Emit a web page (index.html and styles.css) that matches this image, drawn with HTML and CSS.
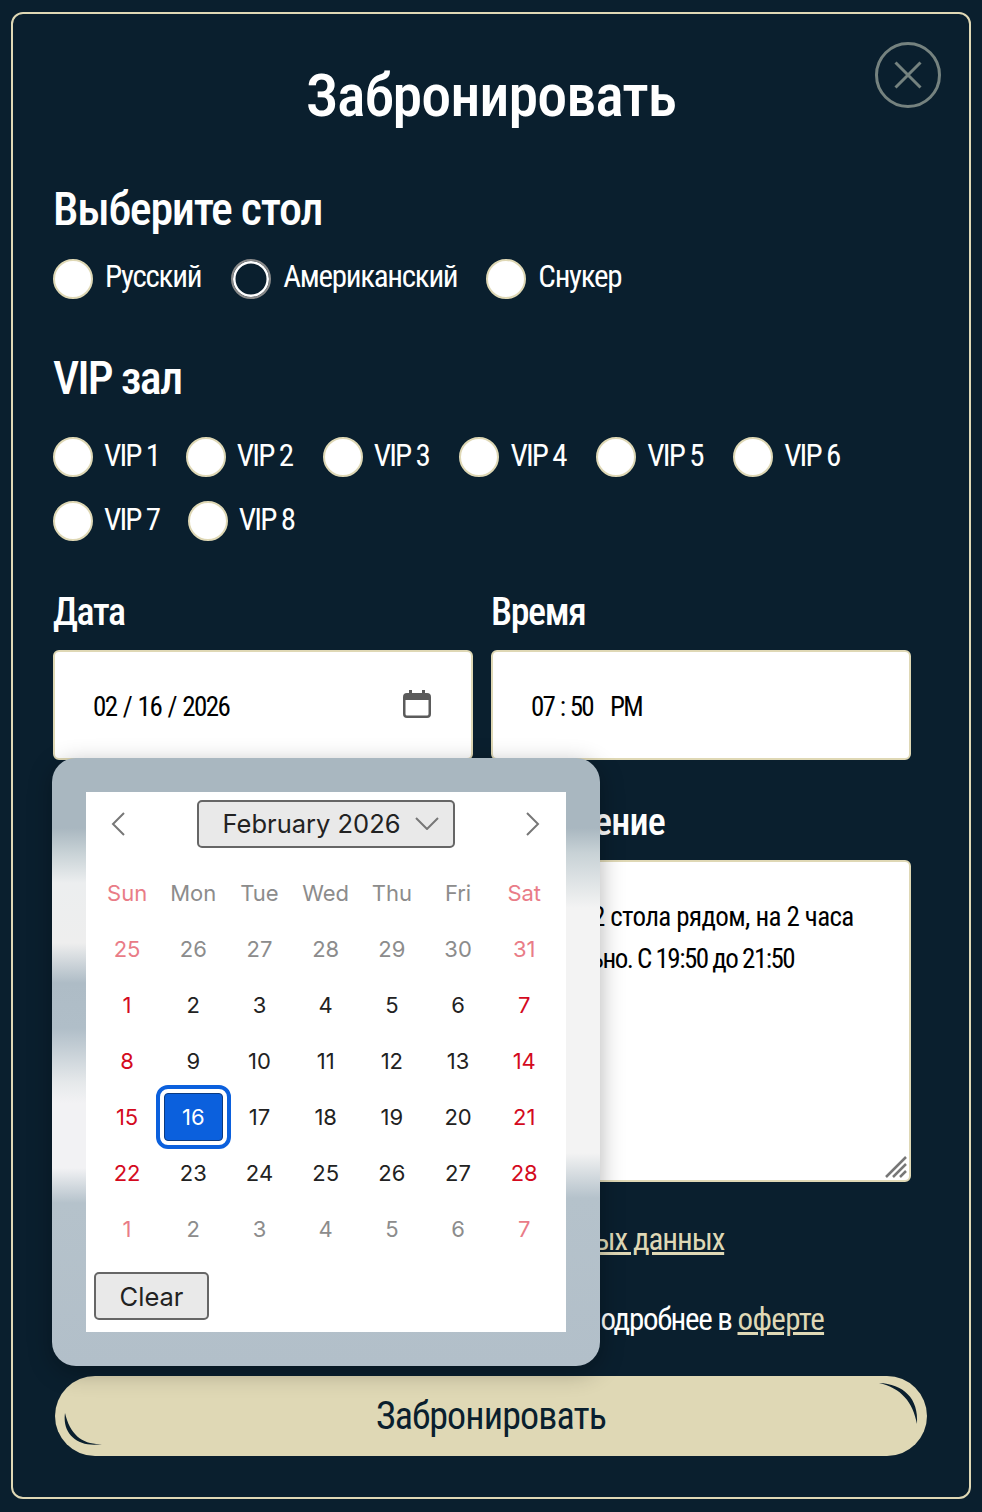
FILE: index.html
```html
<!DOCTYPE html>
<html lang="ru">
<head>
    <meta charset="UTF-8">
    <meta name="viewport" content="width=device-width, initial-scale=1.0">
    <title>Забронировать</title>
    <link rel="stylesheet" href="styles.css">
</head>
<body>
    <div class="modal">
        <button class="close" type="button" aria-label="Закрыть">
            <svg width="66" height="66" viewBox="0 0 66 66" fill="none" stroke="#75827f" stroke-width="3">
                <circle cx="33" cy="33" r="31.5"/>
                <path d="M20.5 20.5 45.5 45.5M45.5 20.5 20.5 45.5"/>
            </svg>
        </button>
        <h1>Забронировать</h1>

        <form class="booking">
            <h2>Выберите стол</h2>
            <div class="radios tables">
                <label><input type="radio" name="table"><span>Русский</span></label>
                <label><input type="radio" name="table" class="focused" checked><span>Американский</span></label>
                <label><input type="radio" name="table"><span>Снукер</span></label>
            </div>

            <h2 class="vip-title">VIP зал</h2>
            <div class="radios vips">
                <label><input type="radio" name="vip"><span>VIP 1</span></label>
                <label><input type="radio" name="vip"><span>VIP 2</span></label>
                <label><input type="radio" name="vip"><span>VIP 3</span></label>
                <label><input type="radio" name="vip"><span>VIP 4</span></label>
                <label><input type="radio" name="vip"><span>VIP 5</span></label>
                <label><input type="radio" name="vip"><span>VIP 6</span></label>
                <label><input type="radio" name="vip"><span>VIP 7</span></label>
                <label><input type="radio" name="vip"><span>VIP 8</span></label>
            </div>

            <div class="fields">
                <div class="field">
                    <h3>Дата</h3>
                    <div class="box">
                        <span>02 / 16 / 2026</span>
                        <svg class="cal-icon" width="28" height="28" viewBox="0 0 28 28" fill="#5b5b5b">
                            <path d="M6 0h3v3h10V0h3v3h2a4 4 0 0 1 4 4v17a4 4 0 0 1-4 4H4a4 4 0 0 1-4-4V7a4 4 0 0 1 4-4h2zM2.500 10v14A1.500 1.500 0 0 0 4 25.500h20a1.500 1.500 0 0 0 1.500-1.500V10z"/>
                        </svg>
                    </div>
                </div>
                <div class="field">
                    <h3>Время</h3>
                    <div class="box time"><span>07 : 50 &nbsp; PM</span></div>
                </div>
                <div class="field"></div>
                <div class="field">
                    <h3 class="note-title">Сообщение</h3>
                    <div class="note">
                        <p>Надо 2 стола рядом, на 2 часа</p>
                        <p class="tight">Отдельно. С 19:50 до 21:50</p>
                        <svg class="grip" width="24" height="24" viewBox="0 0 24 24" stroke="#777" stroke-width="2.500">
                            <path d="M2 22 22 2M9 22 22 9M16 22 22 16"/>
                        </svg>
                    </div>
                </div>
            </div>

            <label class="agree"><input type="checkbox" checked><span>Я даю согласие на обработку <a href="#">персональных данных</a></span></label>
            <label class="offer"><input type="checkbox" checked><span>С условиями бронирования ознакомлен, подробнее в <a href="#">оферте</a></span></label>

            <button class="submit" type="submit">
                <svg class="arc arc-top" width="40" height="42" viewBox="0 0 40 42" fill="#0a1f2e">
                    <path d="M0 0C24 1 40 15 38 41 34 19 22 5 0 0z"/>
                </svg>
                <svg class="arc arc-bottom" width="40" height="38" viewBox="0 0 40 38" fill="#0a1f2e">
                    <path d="M1 3C-2 24 14 38 38 34 19 35 6 25 1 3z"/>
                </svg>
                Забронировать
            </button>
        </form>

        <div class="picker">
            <div class="calendar">
                <div class="cal-head">
                    <svg width="16" height="26" viewBox="0 0 16 26" fill="none" stroke="#777" stroke-width="2"><path d="M14 2 3 13l11 11"/></svg>
                    <div class="month">February 2026
                        <svg width="26" height="14" viewBox="0 0 26 14" fill="none" stroke="#777" stroke-width="2"><path d="M2 2l11 11L24 2"/></svg>
                    </div>
                    <svg width="16" height="26" viewBox="0 0 16 26" fill="none" stroke="#777" stroke-width="2"><path d="M2 2l11 11L2 24"/></svg>
                </div>
                <div class="grid" id="days">
                    <b class="wk red">Sun</b><b class="wk">Mon</b><b class="wk">Tue</b><b class="wk">Wed</b><b class="wk">Thu</b><b class="wk">Fri</b><b class="wk red">Sat</b>
                    <i class="off red">25</i><i class="off">26</i><i class="off">27</i><i class="off">28</i><i class="off">29</i><i class="off">30</i><i class="off red">31</i>
                    <i class="hol">1</i><i>2</i><i>3</i><i>4</i><i>5</i><i>6</i><i class="hol">7</i>
                    <i class="hol">8</i><i>9</i><i>10</i><i>11</i><i>12</i><i>13</i><i class="hol">14</i>
                    <i class="hol">15</i><i class="today">16</i><i>17</i><i>18</i><i>19</i><i>20</i><i class="hol">21</i>
                    <i class="hol">22</i><i>23</i><i>24</i><i>25</i><i>26</i><i>27</i><i class="hol">28</i>
                    <i class="off red">1</i><i class="off">2</i><i class="off">3</i><i class="off">4</i><i class="off">5</i><i class="off">6</i><i class="off red">7</i>
                </div>
                <button class="clear" type="button">Clear</button>
            </div>
        </div>
    </div>
</body>
</html>
```

FILE: styles.css
```css
* {
    box-sizing: border-box;
}

body {
    margin: 0;
    background-color: #0a1f2e;
    font-family: Roboto, "Liberation Sans", sans-serif;
    font-stretch: 75%;
    color: #fff;
}

.modal {
    position: relative;
    width: 960px;
    height: 1487px;
    margin: 12px 0 0 11px;
    padding: 0 40px;
    border: 2px solid #dfd8b5;
    border-radius: 12px;
}

.close {
    position: absolute;
    top: 28px;
    right: 28px;
    padding: 0;
    border: none;
    background: none;
    line-height: 0;
}

h1 {
    margin: 0;
    padding-top: 46px;
    font-size: 60px;
    line-height: 72px;
    font-weight: 500;
    letter-spacing: -1px;
    text-align: center;
}

h2 {
    margin: 49px 0 0;
    font-size: 46px;
    line-height: 56px;
    font-weight: 470;
    letter-spacing: -1.3px;
}

.vip-title {
    margin-top: 40px;
    letter-spacing: -1.7px;
}

.radios {
    display: flex;
    flex-wrap: wrap;
    font-size: 31px;
    letter-spacing: -1.3px;
}

.radios label {
    display: flex;
    align-items: center;
    gap: 12px;
    height: 64px;
}

.radios input {
    appearance: none;
    width: 40px;
    height: 40px;
    margin: 2px 0 0;
    border: 2px solid #dfd8b5;
    border-radius: 50%;
    background-color: #fff;
}

.radios input.focused {
    border: 2px solid #8a8a8a;
    background-color: #0a1f2e;
    box-shadow: inset 0 0 0 2.500px #fff;
}

.radios span {
    position: relative;
    top: -2px;
}

.tables {
    margin-top: 9px;
    gap: 0 29px;
}

.tables label:first-child {
    margin-right: 1px;
}

.vips {
    margin-top: 18px;
    gap: 0 30.600px;
    width: 860px;
    letter-spacing: -1.9px;
}

.vips label {
    gap: 11px;
}

.vips label:first-child {
    margin-right: -4px;
}

.vips label:nth-child(7) {
    margin-right: -2px;
}

.vips span {
    top: -1px;
}

.fields {
    display: grid;
    grid-template-columns: 420px 420px;
    gap: 0 18px;
    margin-top: 37px;
}

h3 {
    margin: 0 0 15px;
    font-size: 38px;
    line-height: 46px;
    font-weight: 500;
    letter-spacing: -1.4px;
}

.box {
    display: flex;
    justify-content: space-between;
    align-items: center;
    height: 110px;
    padding: 3px 40px 0 38px;
    border: 2px solid #dfd8b5;
    border-radius: 6px;
    background-color: #fff;
    color: #000;
    font-size: 27px;
    letter-spacing: -1.500px;
    word-spacing: 1.500px;
}

.time {
    letter-spacing: -1.900px;
}

.cal-icon {
    margin-top: -5px;
}

.note-title {
    margin-top: 39px;
    letter-spacing: -0.8px;
}

.note {
    position: relative;
    height: 322px;
    padding: 34px 38px;
    border: 2px solid #dfd8b5;
    border-radius: 6px;
    background-color: #fff;
    color: #000;
    font-size: 27px;
    line-height: 42px;
    letter-spacing: -0.6px;
    white-space: nowrap;
}

.note p {
    margin: 0;
}

.note .tight {
    letter-spacing: -1.500px;
}

.grip {
    position: absolute;
    right: 1px;
    bottom: 1px;
}

.agree,
.offer {
    display: flex;
    align-items: center;
    font-size: 31px;
    line-height: 40px;
}

.agree input,
.offer input {
    width: 40px;
    height: 40px;
    margin: 0;
}

.agree {
    gap: 6px;
    margin-top: 38px;
    letter-spacing: -1.1px;
}

.offer {
    gap: 7px;
    margin-top: 40px;
    letter-spacing: -1.3px;
}

.agree a,
.offer a {
    color: #dfd8b5;
}

.offer a {
    letter-spacing: -0.6px;
}

.submit {
    position: relative;
    display: block;
    width: 872px;
    height: 80px;
    margin: 36px 0 0 2px;
    border: none;
    border-radius: 40px;
    background-color: #dfd8b5;
    color: #0a1f2e;
    font-family: inherit;
    font-stretch: inherit;
    font-size: 38px;
    font-weight: 450;
    letter-spacing: -0.9px;
}

.arc {
    position: absolute;
}

.arc-top {
    top: 7px;
    right: 8px;
}

.arc-bottom {
    left: 9px;
    bottom: 8px;
}

.picker {
    position: absolute;
    top: 744px;
    left: 39px;
    width: 548px;
    height: 608px;
    padding: 34px;
    border-radius: 24px;
    background-color: #b2bfc9;
    background-image:
        linear-gradient(#a9b7c0 0, #a9b7c0 70px, #c8d2d6 95px, #eceeef 125px, #eeeeee 185px, #aebcc6 225px, #b0bec8 270px, #e6e9eb 325px, #f2f2f4 345px, #f2f2f4 410px, #b5c2cb 445px, #b2bfc9 100%),
        linear-gradient(#a9b7c0 0, #a9b7c0 70px, #c8d2d6 95px, #f3f3f3 150px, #f3f3f3 395px, #b5c2cb 440px, #b2bfc9 100%);
    background-size: 50% 100%;
    background-position: left top, right top;
    background-repeat: no-repeat;
    box-shadow: 0 6px 24px rgba(0, 0, 0, 0.3);
}

.calendar {
    position: relative;
    height: 540px;
    background-color: #fff;
    font-family: Inter, sans-serif;
    font-stretch: normal;
    letter-spacing: normal;
    color: #222;
}

.cal-head {
    display: flex;
    justify-content: space-between;
    align-items: center;
    padding: 8px 25px 0 24px;
}

.month {
    display: flex;
    justify-content: space-between;
    align-items: center;
    width: 258px;
    height: 48px;
    padding: 0 13px 2px 24px;
    border: 2px solid #666;
    border-radius: 5px;
    background-color: #e9e9e9;
    font-size: 25.500px;
}

.grid {
    display: grid;
    grid-template-columns: repeat(7, 66.2px);
    grid-auto-rows: 56px;
    margin: 17px 0 0 8px;
    font-size: 22px;
}

.grid b,
.grid i {
    display: flex;
    justify-content: center;
    align-items: center;
    font-style: normal;
    font-weight: 400;
}

.wk {
    color: #8c8c8c;
}

.off {
    color: #8c8c8c;
}

.red {
    color: #e97c87;
}

.hol {
    color: #d40a1e;
}

.grid .today {
    width: 59px;
    height: 48px;
    margin: 4px auto;
    border: 1.5px solid #0b3a80;
    border-radius: 4px;
    background-color: #0b60dd;
    color: #fff;
    outline: 4px solid #0b60dd;
    outline-offset: 4px;
    box-shadow: 0 0 0 4px #fff;
}

.clear {
    position: absolute;
    left: 8px;
    bottom: 12px;
    width: 115px;
    height: 48px;
    padding: 1px 0 0;
    border: 2px solid #666;
    border-radius: 5px;
    background-color: #e9e9e9;
    color: #222;
    font-family: inherit;
    font-size: 25.500px;
}
```
